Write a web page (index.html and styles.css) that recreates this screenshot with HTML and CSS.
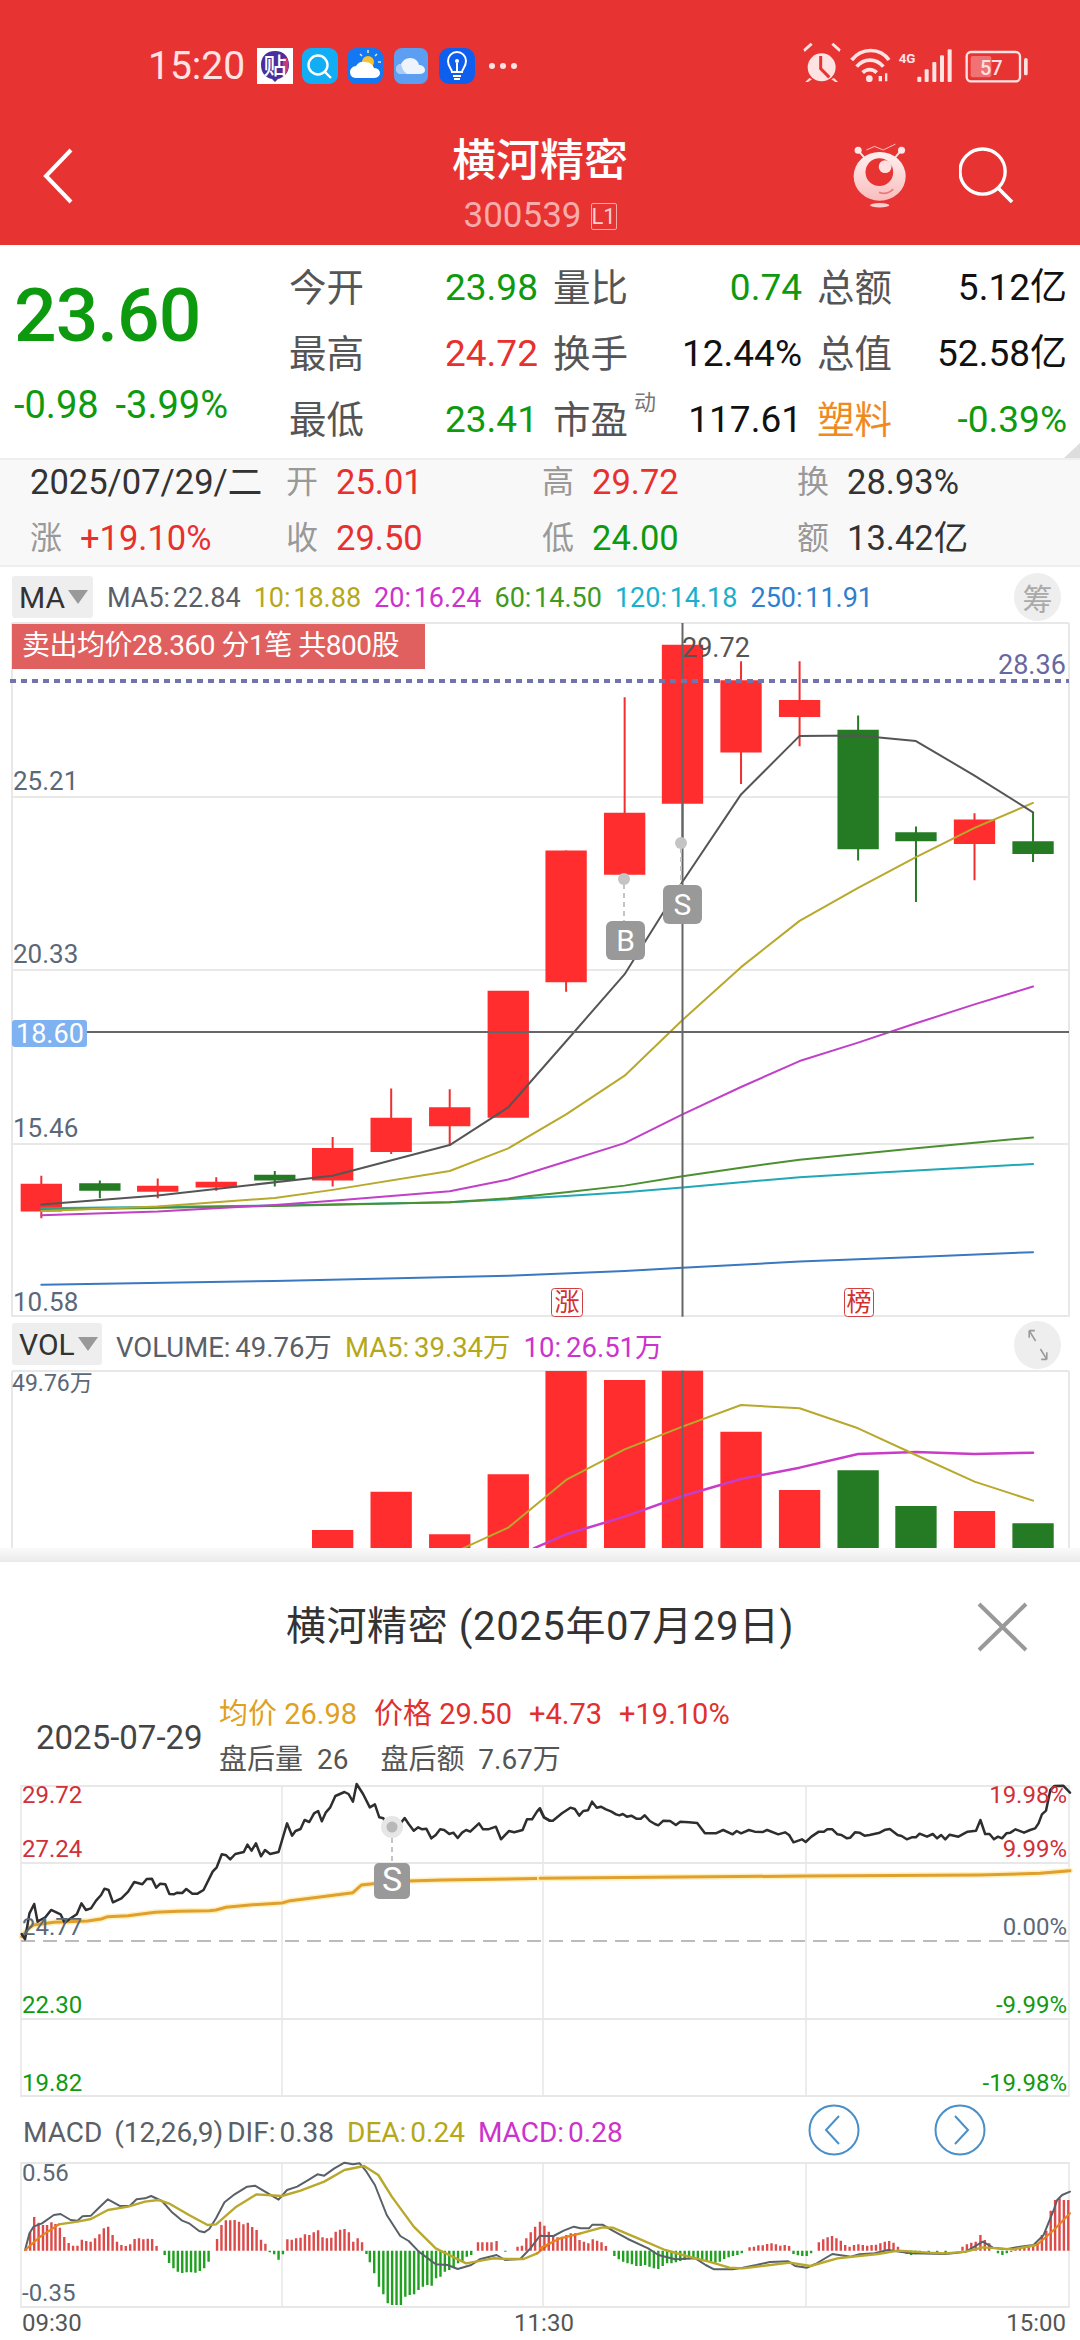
FILE: index.html
```html
<!DOCTYPE html>
<html lang="zh">
<head>
<meta charset="utf-8">
<title>横河精密</title>
<link rel="stylesheet" href="styles.css">
</head>
<body>
<div class="page">
  <header class="header">
    <div class="statusbar">
      <span class="time">15:20</span>
      <div class="notif">
        <svg class="nicon" viewBox="0 0 36 36"><rect width="36" height="36" fill="#fff"/><path d="M18 3c9 0 14 6 14 14s-6 13-11 14l-3 3-3-3C9 30 4 25 4 17S9 3 18 3z" fill="#4A2F9C"/><path d="M30 10c2 4 2 10 0 14l-5 5 1-19z" fill="#C43A7C"/><text x="18" y="26" class="tie">贴</text></svg>
        <svg class="nicon" viewBox="0 0 36 36"><rect width="36" height="36" rx="9" fill="#12AEF5"/><circle cx="16" cy="17" r="9.5" fill="none" stroke="#fff" stroke-width="2.4"/><path d="M23 24l6 6" stroke="#fff" stroke-width="2.4"/></svg>
        <svg class="nicon" viewBox="0 0 36 36"><rect width="36" height="36" rx="9" fill="#1478F2"/><circle cx="21" cy="14" r="6" fill="#F7C22F"/><path d="M21 2v3M30 6l-2 2M34 14h-3M13 6l2 2" stroke="#E8E8C0" stroke-width="1.5"/><path d="M9 30c-4 0-6-3-6-6s3-6 6-6c2-4 6-5 9-4 5 0 8 3 9 6 4 0 6 3 6 5s-2 5-6 5z" fill="#fff"/></svg>
        <svg class="nicon ncloud" viewBox="0 0 34 36"><rect width="34" height="36" rx="8" fill="#5C9FF2"/><path d="M7 26c-3 0-5-3-5-5s2-5 5-5c2-4 5-6 9-6 5 0 8 3 9 7 3 0 6 2 6 5s-3 4-6 4z" fill="#EDF4FE"/><path d="M7 26c-3 0-5-3-5-5s2-5 5-5c1 4 2 7 6 10z" fill="#A9CBF7"/></svg>
        <svg class="nicon" viewBox="0 0 36 36"><rect width="36" height="36" rx="10" fill="#0F5FEE"/><path d="M13 24c0-3-4-5-4-11a9 9 0 0 1 18 0c0 6-4 8-4 11z" fill="none" stroke="#fff" stroke-width="2"/><path d="M14 28h8M15 31h6M18 24v-9" stroke="#fff" stroke-width="2"/><circle cx="18" cy="13" r="2" fill="#fff"/></svg>
        <span class="dots"><i></i><i></i><i></i></span>
      </div>
      <svg class="sysicons" viewBox="0 0 720 150">
        <g fill="#FFE3E3">
          <circle cx="65" cy="82" r="42"/>
          <path d="M14 36L38 14 32 8 10 28zM118 36L94 14 100 8 122 28zM28 114l-12 12h8l12-8zM102 114l12 12h-8l-12-8z"/>
          <path d="M62 48v38l26 26" fill="none" stroke="#E83333" stroke-width="9"/>
          <circle cx="208" cy="116" r="10"/>
          <path d="M236 108h10v16h-10zM255 100h7v24h-7z"/>
          <rect x="352" y="110" width="12" height="16" rx="3"/><rect x="374" y="88" width="12" height="38" rx="3"/><rect x="397" y="66" width="12" height="60" rx="3"/><rect x="420" y="46" width="12" height="80" rx="3"/><rect x="443" y="28" width="12" height="98" rx="3"/>
          <rect x="672" y="54" width="11" height="52" rx="5"/>
        </g>
        <g fill="none" stroke="#FFE3E3" stroke-width="11">
          <path d="M155 60c30-38 85-38 112 0"/>
          <path d="M170 80c22-26 58-26 80 0"/>
          <path d="M188 98c12-12 30-12 42 0"/>
        </g>
        <text x="296" y="68" class="sys4g">4G</text>
        <rect x="500" y="36" width="160" height="88" rx="13" fill="none" stroke="#FFE3E3" stroke-width="7"/>
        <rect x="512" y="48" width="62" height="64" rx="6" fill="#F07272"/>
        <text x="540" y="104" class="sysbat">57</text>
      </svg>
    </div>
    <nav class="navbar">
      <svg class="back" viewBox="0 0 30 56"><path d="M28 2L3 28l25 26" fill="none" stroke="#fff" stroke-width="4"/></svg>
      <div class="titles">
        <div class="title">横河精密</div>
        <div class="code"><span>300539</span><span class="lv">L1</span></div>
      </div>
      <div class="navright">
        <svg class="mascot" viewBox="155 305 168 201">
          <defs><linearGradient id="mg" x1="0" y1="0" x2="0" y2="1"><stop offset="0" stop-color="#FFF0F0"/><stop offset="1" stop-color="#F9BDBD"/></linearGradient></defs>
          <path d="M192 352l-20-24M284 352l20-24" stroke="#FFE3E3" stroke-width="6"/>
          <circle cx="171" cy="327" r="11" fill="#FFE8E8"/><circle cx="306" cy="327" r="11" fill="#FFE8E8"/>
          <path d="M197 326l25-11 27 11 38-18" fill="none" stroke="#FFC8C8" stroke-width="3"/>
          <ellipse cx="238" cy="408" rx="81" ry="76" fill="url(#mg)"/>
          <circle cx="237" cy="395" r="43" fill="#E83333"/>
          <circle cx="255" cy="378" r="20" fill="#FFE0E0"/>
          <path d="M236 458c16 6 30 4 44-10" fill="none" stroke="#E87A7A" stroke-width="5"/>
          <ellipse cx="238" cy="498" rx="30" ry="7" fill="#FBD0D0"/>
        </svg>
        <svg class="searchicon" viewBox="0 0 56 57"><circle cx="24" cy="25" r="23" fill="none" stroke="#fff" stroke-width="3.4"/><path d="M40 42l14 14" stroke="#fff" stroke-width="3.6"/></svg>
      </div>
    </nav>
  </header>

  <section class="quote">
    <div class="quote-left">
      <div class="bigprice">23.60</div>
      <div class="change"><span>-0.98</span><span>-3.99%</span></div>
    </div>
    <div class="quote-grid">
      <span class="qk">今开</span><span class="qv green">23.98</span><span class="qk">量比</span><span class="qv r green">0.74</span><span class="qk e">总额</span><span class="qv r">5.12亿</span>
      <span class="qk">最高</span><span class="qv red">24.72</span><span class="qk">换手</span><span class="qv r">12.44%</span><span class="qk e">总值</span><span class="qv r">52.58亿</span>
      <span class="qk">最低</span><span class="qv green">23.41</span><span class="qk dyn">市盈<sup class="sup">动</sup></span><span class="qv r">117.61</span><span class="qk e orange">塑料</span><span class="qv r green">-0.39%</span>
    </div>
    <div class="fold"></div>
  </section>

  <section class="daybar">
    <div class="dc"><span class="dval">2025/07/29/二</span></div>
    <div class="dc"><span class="dk">开</span><span class="red2">25.01</span></div>
    <div class="dc"><span class="dk">高</span><span class="red2">29.72</span></div>
    <div class="dc"><span class="dk">换</span><span class="dval">28.93%</span></div>
    <div class="dc"><span class="dk">涨</span><span class="red2">+19.10%</span></div>
    <div class="dc"><span class="dk">收</span><span class="red2">29.50</span></div>
    <div class="dc"><span class="dk">低</span><span class="green">24.00</span></div>
    <div class="dc"><span class="dk">额</span><span class="dval">13.42亿</span></div>
  </section>

  <div class="indbar">
    <div class="indbtn"><span>MA</span><i class="caret"></i></div>
    <div class="indtxt">
      <span class="c-k">MA5: 22.84</span><span class="c-y">10: 18.88</span><span class="c-p">20: 16.24</span><span class="c-g">60: 14.50</span><span class="c-t">120: 14.18</span><span class="c-b">250: 11.91</span>
    </div>
    <div class="round">筹</div>
  </div>

  <div class="kline">
    <svg class="chart" viewBox="0 623 1080 694" width="1080" height="694">
      <path class="grid" d="M12 797H1069M12 970H1069M12 1144H1069M12 623H1069M12 1316H1069M12 623V1317M1069 623V1317"/>
      <text class="ax" x="13" y="790">25.21</text>
      <text class="ax" x="13" y="963">20.33</text>
      <text class="ax" x="13" y="1137">15.46</text>
      <text class="ax" x="13" y="1311">10.58</text>
      <g transform="translate(0 600) scale(.6887 .4719)">
        <path class="wick wr" d="M60 1220V1310M229 1226V1268M314 1223V1252M483 1138V1243M568 1035V1174M653 1037V1157M822 531V830M907 206V582M991 95V505M1076 130V390M1161 130V310M1415 452V594"/>
        <path class="wick wg" d="M145 1230V1268M399 1210V1243M1246 245V552M1330 480V640M1500 450V555"/>
        <path fill="#FF2D2D" d="M30 1237h60v59h-60zM199 1241h60v13h-60zM284 1233h60v12h-60zM453 1161h60v69h-60zM538 1097h60v73h-60zM623 1075h60v40h-60zM708 828h60v269h-60zM792 531h60v279h-60zM877 451h60v131h-60zM961 95h60v337h-60zM1046 170h60v153h-60zM1131 212h60v36h-60zM1385 465h60v52h-60z"/>
        <path fill="#247B24" d="M115 1236h60v16h-60zM369 1218h60v12h-60zM1216 275h60v253h-60zM1300 492h60v19h-60zM1470 511h60v27h-60z"/>
        <polyline class="ln blue" points="60,1451 399,1443 738,1432 907,1422 991,1415 1161,1402 1330,1392 1500,1382"/>
        <polyline class="ln teal" points="60,1289 399,1283 653,1276 738,1270 822,1263 907,1255 991,1245 1076,1234 1161,1223 1246,1216 1330,1209 1415,1202 1500,1195"/>
        <polyline class="ln grn" points="60,1292 399,1284 653,1276 738,1268 822,1255 907,1241 991,1221 1076,1203 1161,1186 1246,1174 1330,1162 1415,1150 1500,1139"/>
        <polyline class="ln pur" points="60,1304 229,1296 399,1282 483,1273 568,1263 653,1253 738,1228 822,1190 907,1151 991,1090 1076,1032 1161,977 1246,938 1330,897 1415,857 1500,819"/>
        <polyline class="ln yel" points="60,1295 229,1285 399,1267 483,1250 653,1210 738,1162 822,1090 907,1008 991,890 1076,778 1161,680 1246,610 1330,545 1415,483 1500,430"/>
        <polyline class="ln drk" points="60,1281 229,1262 483,1220 653,1155 738,1075 822,935 907,793 991,597 1076,412 1161,288 1246,287 1330,299 1415,372 1500,450"/>
        <path class="cross" d="M991 49V1519"/>
      </g>
      <path class="cross" d="M12 1032H1069"/>
      <path class="dash68" d="M10 681H1069"/>
      <path class="markdash" d="M624 884V921M681 848V885"/>
      <circle cx="624" cy="879" r="6" fill="#C4C4C4"/>
      <circle cx="681" cy="843" r="6" fill="#C4C4C4"/>
      <rect x="606" y="921" width="39" height="39" rx="6" fill="#999"/>
      <rect x="663" y="885" width="39" height="39" rx="6" fill="#999"/>
      <text class="mk" x="625.5" y="951">B</text>
      <text class="mk" x="682.5" y="915">S</text>
      <text class="hi" x="682" y="657">29.72</text>
      <text class="ref" x="998" y="674">28.36</text>
      <rect x="12" y="1020" width="75" height="27" rx="3" fill="#7FB2F0"/>
      <text class="pricetag" x="16" y="1043">18.60</text>
      <rect x="551.5" y="1288.5" width="31" height="28" rx="3" fill="#fff" stroke="#D04040"/>
      <rect x="844.5" y="1288.5" width="29" height="28" rx="3" fill="#fff" stroke="#D04040"/>
      <text class="hot" x="567" y="1311">涨</text>
      <text class="hot" x="859" y="1311">榜</text>
    </svg>
    <div class="selltag">卖出均价28.360 分1笔 共800股</div>
  </div>

  <div class="indbar volbar">
    <div class="indbtn wide"><span>VOL</span><i class="caret"></i></div>
    <div class="indtxt vtxt">
      <span class="c-k">VOLUME: 49.76万</span><span class="c-y">MA5: 39.34万</span><span class="c-p">10: 26.51万</span>
    </div>
    <div class="round">
      <svg class="expand" viewBox="0 0 26 40"><path d="M2 2h7M2 2v9M2 2l8 13M24 38h-7M24 38v-9M24 38l-8-13" fill="none" stroke="#999" stroke-width="2"/></svg>
    </div>
  </div>
  <div class="vol">
    <svg class="chart" viewBox="0 1371 1080 177" width="1080" height="177">
      <path class="grid" d="M12 1371H1069M12 1371V1548M1069 1371V1548"/>
      <g transform="translate(0 1280) scale(.6887 .3333)">
        <path fill="#FF2D2D" d="M453 750h60v60h-60zM538 635h60v175h-60zM623 763h60v47h-60zM708 583h60v227h-60zM792 273h60v537h-60zM877 300h60v510h-60zM961 272h60v538h-60zM1046 455h60v355h-60zM1131 630h60v180h-60zM1385 693h60v117h-60z"/>
        <path fill="#247B24" d="M1216 571h60v239h-60zM1300 678h60v132h-60zM1470 730h60v80h-60z"/>
        <polyline class="ln pur2" points="775,805 822,763 907,710 991,648 1076,597 1161,563 1246,522 1330,516 1415,522 1500,518"/>
        <polyline class="ln yel" points="672,805 738,743 822,600 907,508 991,440 1076,375 1161,385 1246,445 1330,525 1415,605 1500,662"/>
        <path class="cross" d="M991 272V810"/>
      </g>
      <text class="ax vmax" x="12" y="1391">49.76万</text>
    </svg>
  </div>

  <section class="sheet">
    <div class="sheet-head">
      <div class="sheet-title">横河精密 (2025年07月29日)</div>
      <svg class="close" viewBox="0 0 51 50"><path d="M2 2l47 46M49 2L2 48" stroke="#999" stroke-width="4" fill="none"/></svg>
    </div>
    <div class="info">
      <div class="infodate">2025-07-29</div>
      <div class="infocol">
        <div class="inforow"><span class="avg">均价 26.98</span><span class="pr">价格 29.50</span><span class="pr">+4.73</span><span class="pr">+19.10%</span></div>
        <div class="inforow after"><span>盘后量&nbsp;&nbsp;26</span><span>盘后额&nbsp;&nbsp;7.67万</span></div>
      </div>
    </div>
    <svg class="chart" viewBox="0 1785 1080 312" width="1080" height="312">
      <path class="grid" d="M21 1786H1069M21 1863H1069M21 2019H1069M21 2096H1069"/>
      <path class="vgrid" d="M21 1785V2097M282 1785V2097M543 1785V2097M806 1785V2097M1069 1785V2097"/>
      <path class="zero" d="M21 1941H1069"/>
      <g transform="translate(20 1780) scale(.338 .3333)">
        <polyline class="ln glow" points="5,470 25,445 40,435 100,427 200,423 240,417 260,410 320,407 400,397 470,394 560,392 580,390 610,382 680,375 775,369 800,362 870,353 985,338 1010,315 1045,311 1150,303 1250,300 1568,295"/>
        <polyline class="ln avgl" points="5,470 25,445 40,435 100,427 200,423 240,417 260,410 320,407 400,397 470,394 560,392 580,390 610,382 680,375 775,369 800,362 870,353 985,338 1010,315 1045,311 1150,303 1250,300 1568,295"/>
        <polyline class="ln price" points="5,462 15,478 28,400 42,372 52,425 60,420 75,412 92,390 120,403 132,428 150,415 168,403 182,370 195,390 210,385 225,362 240,345 250,326 262,330 275,367 300,355 320,335 338,306 362,313 375,297 390,296 403,323 415,311 430,313 442,342 455,343 465,338 480,339 492,327 510,341 525,341 543,330 570,275 582,262 597,223 610,226 622,238 637,222 662,216 673,194 685,212 698,190 713,229 725,210 740,222 765,216 790,130 805,167 815,153 830,147 842,120 856,126 870,100 882,93 893,124 905,97 918,82 933,48 960,36 972,42 985,65 996,12 1015,42 1035,82 1050,73 1063,112 1075,115 1085,135 1100,148 1120,138 1138,114 1150,132 1165,152 1178,142 1190,148 1202,146 1217,175 1230,165 1243,148 1255,150 1270,162 1282,158 1295,174 1308,158 1320,150 1332,155 1358,130 1370,148 1385,148 1408,140 1423,178 1447,153 1462,157 1487,150 1500,118 1515,118 1530,94 1537,86 1550,112 1568,122"/>
      </g>
      <g transform="translate(540 1780) scale(.338 .3333)">
        <polyline class="ln glow" points="0,295 790,288 1300,285 1480,280 1568,272"/>
        <polyline class="ln avgl" points="0,295 790,288 1300,285 1480,280 1568,272"/>
        <polyline class="ln price" points="0,85 12,112 28,122 38,122 65,100 90,83 103,87 116,107 128,93 142,91 154,65 168,83 180,80 195,88 210,94 225,103 235,106 245,102 257,110 270,107 285,116 298,116 310,106 325,123 340,132 350,136 365,122 385,123 402,135 415,125 440,127 465,129 488,160 520,160 542,150 570,163 582,153 595,160 618,150 635,155 660,156 672,150 705,163 725,157 737,165 750,187 775,178 786,186 803,170 825,155 840,155 850,148 865,148 880,163 892,165 908,175 918,173 932,157 945,158 960,167 975,165 1005,158 1022,149 1035,147 1058,165 1070,168 1085,178 1100,172 1112,172 1123,161 1145,170 1162,162 1175,175 1187,165 1199,178 1212,164 1238,170 1265,155 1290,152 1303,120 1317,162 1330,162 1343,178 1355,170 1367,175 1380,160 1392,158 1407,148 1432,158 1450,150 1465,145 1475,130 1485,103 1497,92 1510,30 1522,18 1548,17 1568,38"/>
      </g>
      <circle cx="392" cy="1827" r="11" fill="#E6E6E6"/>
      <circle cx="392" cy="1827" r="5.5" fill="#B8B8B8"/>
      <path class="markdash" d="M392 1838V1863"/>
      <rect x="374" y="1863" width="36" height="36" rx="5" fill="#999"/>
      <text class="mk sm" x="392" y="1891">S</text>
      <g class="ax2">
        <text class="red3" x="22" y="1803">29.72</text>
        <text class="red3" x="22" y="1857">27.24</text>
        <text class="gr3" x="22" y="1935">24.77</text>
        <text class="grn3" x="22" y="2013">22.30</text>
        <text class="grn3" x="22" y="2091">19.82</text>
        <text class="red3 e" x="1067" y="1803">19.98%</text>
        <text class="red3 e" x="1067" y="1857">9.99%</text>
        <text class="gr3 e" x="1067" y="1935">0.00%</text>
        <text class="grn3 e" x="1067" y="2013">-9.99%</text>
        <text class="grn3 e" x="1067" y="2091">-19.98%</text>
      </g>
    </svg>
    <div class="macdbar">
      <div class="indtxt mtxt"><span class="c-k">MACD&nbsp;&nbsp; (12,26,9) DIF: 0.38</span><span class="c-y">DEA: 0.24</span><span class="c-p">MACD: 0.28</span></div>
      <div class="arrows">
        <svg class="arrow" viewBox="0 0 52 52"><circle cx="26" cy="26" r="24.5" fill="none" stroke="#4A8FC8" stroke-width="2"/><path d="M31 12L18 26l13 14" fill="none" stroke="#4A8FC8" stroke-width="2"/></svg>
        <svg class="arrow" viewBox="0 0 52 52"><circle cx="26" cy="26" r="24.5" fill="none" stroke="#4A8FC8" stroke-width="2"/><path d="M21 12l13 14-13 14" fill="none" stroke="#4A8FC8" stroke-width="2"/></svg>
      </div>
    </div>
    <svg class="chart" viewBox="0 2162 1080 146" width="1080" height="146">
      <path class="grid" d="M21 2163H1069M21 2307H1069"/>
      <path class="vgrid" d="M21 2162V2308M282 2162V2308M543 2162V2308M806 2162V2308M1069 2162V2308"/>
      <g transform="translate(20 2155) scale(.338 .3333)">
        <path class="barr" d="M18 287V283M30 287V232M42 287V186M55 287V203M68 287V210M80 287V210M93 287V202M105 287V207M118 287V218M131 287V246M144 287V264M157 287V272M170 287V272M183 287V254M196 287V258M209 287V260M222 287V250M235 287V238M248 287V220M261 287V215M274 287V240M287 287V260M300 287V270M313 287V273M326 287V268M339 287V252M352 287V250M365 287V253M378 287V251M391 287V252M404 287V273M583 287V252M596 287V210M609 287V196M622 287V196M635 287V195M648 287V200M661 287V208M674 287V203M687 287V216M700 287V225M713 287V254M726 287V266M791 287V253M804 287V254M817 287V250M830 287V248M843 287V238M856 287V240M869 287V232M882 287V226M895 287V247M908 287V250M921 287V248M934 287V230M947 287V224M960 287V222M973 287V232M986 287V260M999 287V250M1012 287V262M1355 287V262M1368 287V262M1382 287V262M1395 287V262M1410 287V258M1472 287V275M1485 287V272M1498 287V250M1511 287V232M1524 287V215"/>
        <path class="barg" d="M428 287V300M441 287V324M454 287V340M467 287V350M480 287V354M493 287V352M506 287V352M519 287V353M532 287V348M545 287V340M558 287V320M739 287V292M752 287V298M765 287V314M778 287V298M1025 287V297M1035 287V322M1048 287V355M1062 287V395M1075 287V418M1088 287V445M1101 287V450M1114 287V450M1127 287V450M1140 287V425M1153 287V420M1166 287V418M1179 287V405M1192 287V395M1205 287V390M1218 287V392M1231 287V370M1244 287V365M1257 287V350M1270 287V345M1283 287V338M1296 287V325M1309 287V320M1322 287V305M1335 287V300M1436 287V290"/>
        <polyline class="ln dif" points="15,285 28,235 40,215 65,205 100,180 120,177 150,195 170,197 185,184 210,182 232,160 260,133 295,153 325,152 345,133 370,130 388,123 420,138 450,172 480,197 500,205 530,228 545,232 560,222 580,190 605,142 635,118 672,95 695,92 725,110 765,134 790,105 820,95 850,77 880,58 900,62 930,40 960,23 985,28 1005,25 1025,50 1050,90 1085,180 1125,243 1150,258 1180,290 1230,328 1265,330 1295,342 1335,330 1360,313 1410,300 1435,315 1480,312 1510,280 1540,240"/>
        <polyline class="ln dea" points="115,208 170,200 210,192 260,165 320,155 370,140 410,135 440,145 500,180 555,210 580,208 640,155 700,118 775,123 830,107 900,80 960,45 1018,33 1060,60 1100,125 1165,215 1230,280 1320,325 1400,310 1440,312 1490,312 1530,295"/>
        <polyline class="ln org" points="15,285 60,245 115,208"/>
        <polyline class="ln org" points="1530,295 1568,265"/>
      </g>
      <g transform="translate(540 2200) scale(.338 .3333)">
        <path class="barr" d="M0 152V65M13 152V77M26 152V95M39 152V108M52 152V112M65 152V110M78 152V105M91 152V100M104 152V100M117 152V120M130 152V125M143 152V130M156 152V118M169 152V122M182 152V127M195 152V138M620 152V142M633 152V140M646 152V136M659 152V136M672 152V132M685 152V130M698 152V133M711 152V137M724 152V135M737 152V138M825 152V127M838 152V118M851 152V112M864 152V108M877 152V115M890 152V122M903 152V135M916 152V140M929 152V135M942 152V133M955 152V135M968 152V137M981 152V135M994 152V134M1007 152V130M1020 152V125M1033 152V123M1046 152V128M1059 152V140M1250 152V140M1263 152V133M1276 152V128M1289 152V125M1303 152V105M1316 152V120M1329 152V130M1407 152V142M1420 152V140M1433 152V138M1446 152V140M1459 152V135M1472 152V130M1485 152V105M1498 152V92M1511 152V32M1524 152V0M1537 152V-5M1550 152V0M1563 152V0"/>
        <path class="barg" d="M220 152V168M233 152V178M246 152V185M259 152V190M272 152V193M285 152V198M298 152V198M311 152V195M324 152V200M337 152V205M350 152V207M363 152V198M376 152V190M389 152V190M402 152V187M415 152V183M428 152V180M441 152V178M454 152V177M467 152V177M480 152V178M493 152V182M506 152V185M519 152V188M532 152V185M545 152V177M558 152V172M571 152V168M584 152V165M597 152V160M750 152V162M763 152V166M776 152V168M789 152V168M802 152V160M1072 152V158M1085 152V162M1098 152V165M1111 152V163M1124 152V158M1150 152V158M1175 152V158M1200 152V160M1355 152V160M1368 152V165M1381 152V160M1394 152V155"/>
        <polyline class="ln dif" points="0,108 40,108 70,92 100,80 120,85 145,85 155,74 185,74 215,92 260,117 320,145 350,165 400,178 460,175 490,195 515,208 570,208 600,203 640,195 680,186 735,184 755,198 790,203 815,192 865,162 920,170 945,163 990,160 1030,150 1065,155 1100,160 1200,162 1260,155 1310,125 1340,143 1380,148 1420,140 1460,135 1490,105 1520,30 1530,0 1545,-15 1568,-25"/>
        <polyline class="ln org" points="0,145 60,115 120,100"/>
        <polyline class="ln dea" points="120,100 185,82 215,83 290,115 370,150 440,170 500,185 560,203 600,205 740,188 800,198 880,175 1000,162 1060,152 1150,158 1200,160 1260,155 1310,142 1400,148 1470,135"/>
        <polyline class="ln org" points="1470,135 1520,90 1568,40"/>
      </g>
      <g class="ax2">
        <text class="gr3" x="22" y="2181">0.56</text>
        <text class="gr3" x="22" y="2301">-0.35</text>
      </g>
    </svg>
    <div class="timeaxis"><span>09:30</span><span>11:30</span><span>15:00</span></div>
  </section>
</div>
</body>
</html>
```
FILE: styles.css
```css
* { box-sizing: border-box; }
html, body { margin: 0; padding: 0; background: #fff; }
body { font-family: Roboto, "Noto Sans CJK SC", sans-serif; color: #222; }
.page { width: 1080px; height: 2340px; overflow: hidden; position: relative; }

/* header */
.header { height: 245px; padding-top: 48px; background: #E83333; color: #fff; }
.statusbar { display: flex; align-items: center; height: 36px; position: relative; padding-left: 148px; }
.time { font-size: 39px; color: #FFE3E3; width: 109px; line-height: 36px; }
.notif { display: flex; align-items: center; gap: 9px; }
.nicon { width: 36px; height: 36px; display: block; }
.ncloud { width: 34px; margin: 0 2px; }
.tie { font: 500 23px "Noto Sans CJK SC", sans-serif; fill: #fff; text-anchor: middle; }
.dots { display: flex; gap: 5px; margin-left: 5px; }
.dots i { width: 6px; height: 6px; border-radius: 50%; background: #FFE3E3; }
.sysicons { width: 240px; height: 50px; display: block; position: absolute; left: 800px; top: -8px; }
.sys4g { font: 700 40px Roboto, sans-serif; fill: #FFE3E3; }
.sysbat { font: 500 60px Roboto, sans-serif; fill: #FFE3E3; }
.navbar { display: grid; grid-template-columns: 1fr auto 1fr; margin-top: 50px; padding: 0 66px; height: 100px; }
.back { width: 30px; height: 56px; margin: 14px 0 0 -23px; display: block; }
.titles { display: flex; flex-direction: column; align-items: center; }
.title { font-size: 44px; font-weight: 500; line-height: 54px; color: #fff; }
.code { display: flex; align-items: center; gap: 9px; margin-top: 11px; font-size: 35px; line-height: 34px; color: #F7ABAB; }
.lv { border: 1px solid #F7ABAB; font-size: 22px; width: 26px; height: 27px; line-height: 25px; text-align: center; color: #FFD0D0; border-radius: 2px; }
.navright { display: flex; justify-content: flex-end; align-items: flex-start; gap: 52px; }
.mascot { width: 54px; height: 67px; margin-top: 8px; }
.searchicon { width: 55px; height: 56px; margin-top: 13px; }

/* quote */
.quote { height: 213px; display: flex; position: relative; background: #fff; }
.quote-left { width: 289px; padding-left: 14px; }
.bigprice { font-size: 75px; font-weight: 500; letter-spacing: -1px; line-height: 80px; margin-top: 30px; color: #0E9A0E; }
.change { display: flex; gap: 17px; font-size: 38px; line-height: 40px; margin-top: 30px; color: #0E9A0E; }
.quote-grid { display: grid; grid-template-columns: 156px 108px 80px 169px 90px 175px; grid-auto-rows: 66px; padding-top: 10px; align-items: center; font-size: 36px; }
.qk { color: #555; font-size: 37.5px; line-height: 44px; white-space: nowrap; }
.qk.e { justify-self: end; }
.qv { color: #111; font-size: 37px; line-height: 44px; white-space: nowrap; }
.qv.r { justify-self: end; }
.dyn { position: relative; }
.sup { position: absolute; left: 81px; top: -6px; font-size: 22px; line-height: 22px; color: #777; }
.green { color: #0E9A0E; }
.red { color: #E8302F; }
.red2 { color: #E8302F; }
.orange { color: #F08A1E; }
.fold { position: absolute; right: 0; bottom: 0; width: 16px; height: 15px; background: #DDD; clip-path: polygon(100% 0, 100% 100%, 0 100%); }

/* day bar */
.daybar { height: 109px; background: #F8F8F8; border-top: 2px solid #EEE; border-bottom: 2px solid #EEE; display: grid; grid-template-columns: 256px 256px 255px 1fr; grid-auto-rows: 56px; padding: 2px 0 0 30px; align-items: start; font-size: 34.5px; }
.dc { display: flex; align-items: center; gap: 18px; white-space: nowrap; line-height: 40px; }
.dk { color: #999; font-size: 32px; }
.dval { color: #333; }

/* indicator bars */
.indbar { height: 56px; display: flex; padding-left: 12px; position: relative; }
.indbtn { width: 81px; height: 42px; margin-top: 9px; background: #EEE; border-radius: 3px; display: flex; align-items: center; padding-left: 7px; gap: 3px; font-size: 30px; color: #333; }
.indbtn.wide { width: 90px; }
.caret { width: 0; height: 0; border: 10px solid transparent; border-top: 14px solid #999; border-bottom: 0; }
.indtxt { display: flex; gap: 13px; font-size: 27px; margin-left: 14px; align-items: center; height: 42px; margin-top: 10px; white-space: nowrap; word-spacing: -4px; }
.c-k { color: #5A6068; }
.c-y { color: #B5A818; }
.c-p { color: #CC33CC; }
.c-g { color: #3E9A20; }
.c-t { color: #18B0CC; }
.c-b { color: #2E7FD0; }
.round { position: absolute; left: 1014px; top: 6px; width: 47px; height: 48px; border-radius: 50%; background: #EEE; color: #AAA; font-size: 30px; display: flex; align-items: center; justify-content: center; }
.volbar { height: 54px; }
.indtxt.vtxt { margin-left: 14px; font-size: 27.5px; word-spacing: -2px; }
.volbar .indbtn { margin-top: 6px; }
.volbar .indtxt { margin-top: 7px; }
.volbar .round { top: 4px; }
.expand { width: 22px; height: 32px; }

/* charts */
.chart { display: block; overflow: visible; }
.kline { position: relative; height: 694px; }
.vol { height: 177px; }
.selltag { position: absolute; left: 12px; top: 1px; width: 413px; height: 45px; background: #E06060; color: #fff; font-size: 28px; line-height: 44px; padding-left: 10px; white-space: nowrap; letter-spacing: -.5px; }
.grid { fill: none; stroke: #E8E8E8; stroke-width: 2; }
.vgrid { fill: none; stroke: #E6E6E6; stroke-width: 1.5; }
.zero { fill: none; stroke: #BBB; stroke-width: 2; stroke-dasharray: 14 8; }
.ax { font: 26px Roboto, sans-serif; fill: #5A6878; }
.vmax { font-size: 23px; font-family: Roboto, "Noto Sans CJK SC", sans-serif; }
.wick { fill: none; stroke-width: 2; vector-effect: non-scaling-stroke; }
.wr { stroke: #F03030; }
.wg { stroke: #247B24; }
.ln { fill: none; stroke-width: 2; stroke-linejoin: round; stroke-linecap: round; vector-effect: non-scaling-stroke; }
.blue { stroke: #3A78C0; }
.teal { stroke: #20A8B8; }
.grn { stroke: #4C9030; }
.pur { stroke: #C040C8; }
.pur2 { stroke: #C83CC8; stroke-width: 2.5; }
.yel { stroke: #B8A82C; }
.drk { stroke: #555; }
.cross { fill: none; stroke: #666; stroke-width: 2; vector-effect: non-scaling-stroke; }
.dash68 { fill: none; stroke: #7474AC; stroke-width: 4; stroke-dasharray: 6 5; }
.markdash { fill: none; stroke: #C4C4C4; stroke-width: 2; stroke-dasharray: 5 4; }
.mk { font: 30px Roboto, sans-serif; fill: #fff; text-anchor: middle; }
.mk.sm { font-size: 34px; }
.hi { font: 27px Roboto, sans-serif; fill: #555; }
.ref { font: 27px Roboto, sans-serif; fill: #6868A0; }
.pricetag { font: 27px Roboto, sans-serif; fill: #fff; }
.hot { font: 25px "Noto Sans CJK SC", sans-serif; fill: #D03030; text-anchor: middle; }

/* sheet */
.sheet { height: 792px; position: relative; background: #fff; }
.sheet::before { content: ""; display: block; height: 14px; background: linear-gradient(#FAFAFA, #EAEAEA); }
.sheet-head { height: 128px; position: relative; display: flex; justify-content: center; padding-top: 39px; }
.sheet-title { font-size: 40px; line-height: 52px; color: #333; white-space: nowrap; letter-spacing: .6px; }
.close { position: absolute; left: 977px; top: 40px; width: 51px; height: 50px; }
.info { height: 95px; display: flex; padding-left: 36px; align-items: center; }
.infodate { width: 183px; font-size: 33px; color: #444; }
.infocol { display: flex; flex-direction: column; gap: 8px; margin-top: -2px; }
.inforow { display: flex; gap: 17px; font-size: 29px; line-height: 38px; color: #555; white-space: nowrap; }
.inforow.after { gap: 32px; font-size: 28px; }
.avg { color: #E0A020; }
.pr { color: #E03030; }
.price { stroke: #2E2E2E; stroke-width: 2.5; }
.avgl { stroke: #E0A030; stroke-width: 3; }
.glow { stroke: #FFF0C0; stroke-width: 6; }
.ax2 text { font-family: Roboto, sans-serif; font-size: 24px; }
.ax2 .e { text-anchor: end; }
.red3 { fill: #D03038; }
.gr3 { fill: #5A6878; }
.grn3 { fill: #109A10; }
.macdbar { height: 65px; display: flex; padding-left: 23px; position: relative; }
.indtxt.mtxt { margin: 14px 0 0; font-size: 28px; word-spacing: -3px; }
.arrows { position: absolute; left: 808px; top: 7px; display: flex; gap: 74px; }
.arrow { width: 52px; height: 52px; }
.barr { fill: none; stroke: #DC4A4A; stroke-width: 2.4; vector-effect: non-scaling-stroke; }
.barg { fill: none; stroke: #1FA01F; stroke-width: 2.4; vector-effect: non-scaling-stroke; }
.dif { stroke: #5A6068; stroke-width: 2; }
.dea { stroke: #B8A82C; stroke-width: 2.4; }
.org { stroke: #E8801C; stroke-width: 2.2; }
.timeaxis { display: flex; justify-content: space-between; padding: 0 14px 0 22px; font-size: 24px; line-height: 30px; color: #555; }
```
